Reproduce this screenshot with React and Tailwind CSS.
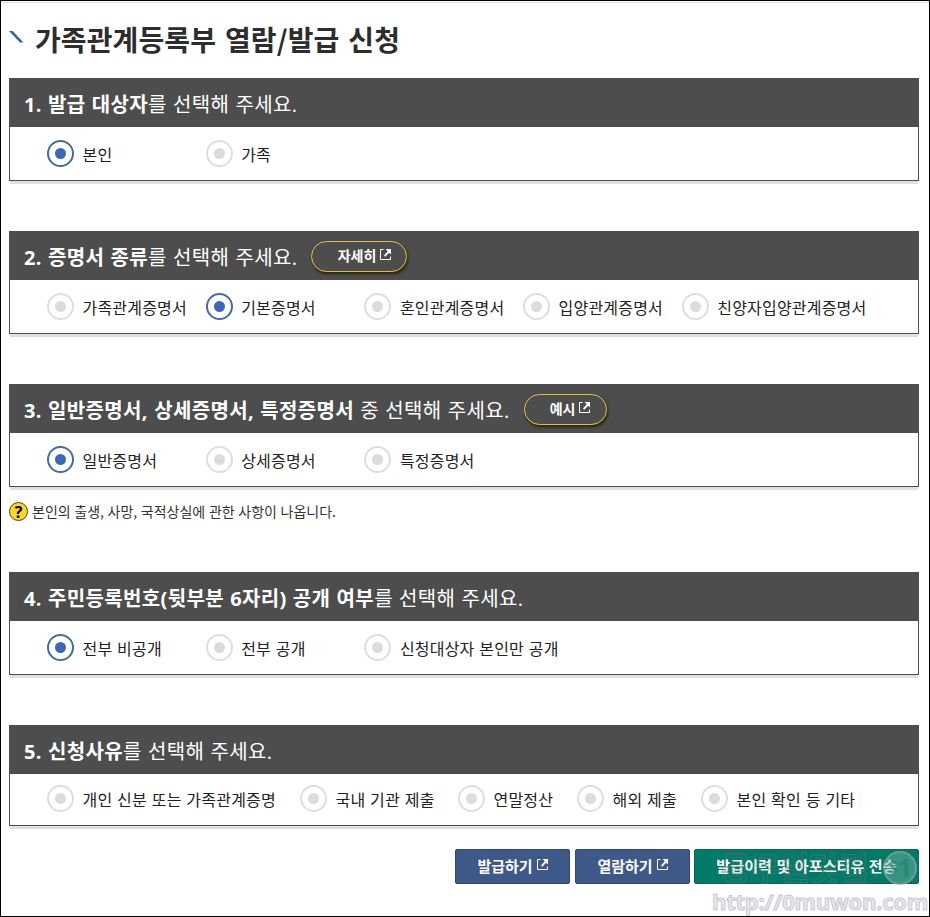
import React, { useState } from "react";

const sections = [
  {
    id: "target",
    strong: "1. 발급 대상자",
    rest: "를 선택해 주세요.",
    options: ["본인", "가족"],
    selected: 0,
  },
  {
    id: "type",
    strong: "2. 증명서 종류",
    rest: "를 선택해 주세요.",
    link: "자세히",
    linkWidth: "w-[96px]",
    options: [
      "가족관계증명서",
      "기본증명서",
      "혼인관계증명서",
      "입양관계증명서",
      "친양자입양관계증명서",
    ],
    selected: 1,
  },
  {
    id: "detail",
    strong: "3. 일반증명서, 상세증명서, 특정증명서",
    rest: " 중 선택해 주세요.",
    link: "예시",
    linkWidth: "w-[83px]",
    options: ["일반증명서", "상세증명서", "특정증명서"],
    selected: 0,
    note: "본인의 출생, 사망, 국적상실에 관한 사항이 나옵니다.",
  },
  {
    id: "privacy",
    strong: "4. 주민등록번호(뒷부분 6자리) 공개 여부",
    rest: "를 선택해 주세요.",
    options: ["전부 비공개", "전부 공개", "신청대상자 본인만 공개"],
    selected: 0,
  },
  {
    id: "reason",
    strong: "5. 신청사유",
    rest: "를 선택해 주세요.",
    options: [
      "개인 신분 또는 가족관계증명",
      "국내 기관 제출",
      "연말정산",
      "해외 제출",
      "본인 확인 등 기타",
    ],
    widths: ["w-[253px]", "w-[158px]", "w-[119px]", "w-[124px]", "w-[160px]"],
    selected: -1,
  },
];

const ExternalIcon = () => (
  <svg
    width="11"
    height="11"
    viewBox="0 0 11 11"
    fill="none"
    stroke="currentColor"
    className="-mt-1"
  >
    <path d="M3.5 .5H.5v10h10V7.5" />
    <path d="M5.5 0H11v5.5L9.2 3.7 5.2 7.7 4 6.5 7.8 2.3z" fill="currentColor" stroke="none" />
  </svg>
);

const Radio = ({ name, label, checked, onChange, width }) => (
  <label
    className={`flex shrink-0 cursor-pointer items-center whitespace-nowrap ${width}`}
  >
    <input
      type="radio"
      name={name}
      checked={checked}
      onChange={onChange}
      className="sr-only"
    />
    <span
      className={`flex size-[27px] shrink-0 items-center justify-center rounded-full border-2 bg-white ${
        checked ? "border-[#476a9f]" : "border-[#dedede]"
      }`}
    >
      <span
        className={`size-[11px] rounded-full ${
          checked ? "bg-[#3c68b1]" : "bg-[#dcdcdc]"
        }`}
      />
    </span>
    <span className="ml-[8.5px] text-base leading-none tracking-[0.2px] [word-spacing:1px] text-[#222]">
      {label}
    </span>
  </label>
);

const Section = ({ section, value, onSelect }) => {
  const compact = Boolean(section.widths);

  return (
    <section>
      <div>
        <div className="flex h-[49px] items-center bg-[#4d4d4d] pl-[15px] font-['Open_Sans','Noto_Sans_CJK_KR',sans-serif] text-xl tracking-[0.35px] [word-spacing:0.7px] text-white">
          <h2 className="pt-1 whitespace-pre">
            <b>{section.strong}</b>
            {section.rest}
          </h2>
          {section.link && (
            <button
              className={`mt-px ml-3.5 flex h-[31px] items-center justify-center gap-1 rounded-full border border-[#e0c04c] pl-2.5 font-['Noto_Sans_CJK_KR',sans-serif] text-[14px] font-bold tracking-normal shadow-[1px_2px_3px_#2b2300] ${section.linkWidth}`}
            >
              {section.link}
              <ExternalIcon />
            </button>
          )}
        </div>
        <div
          className={`flex items-center border border-t-0 border-[#4d4d4d] bg-white pl-[37px] ${
            compact ? "h-[52px] pb-0.5" : "h-[54px]"
          }`}
        >
          {section.options.map((label, i) => (
            <Radio
              key={label}
              name={section.id}
              label={label}
              checked={value === i}
              onChange={() => onSelect(i)}
              width={compact ? section.widths[i] : "w-[158.7px]"}
            />
          ))}
        </div>
        <div className="mx-px h-[3px] bg-[#e0e0e0]" />
      </div>
      {section.note && (
        <p className="mt-3 mb-1 flex h-[19px] items-center text-[14px] [word-spacing:0.5px] text-[#333]">
          <span className="mr-1 flex size-[19px] items-center justify-center rounded-full border border-[#4b4526] bg-[#fbd726] font-['Open_Sans',sans-serif] text-[16px] leading-none font-bold text-black">
            ?
          </span>
          {section.note}
        </p>
      )}
    </section>
  );
};

const Watermark = () => (
  <div className="pointer-events-none absolute right-0 bottom-0 h-[72px] w-[220px]">
    <span className="absolute top-1 left-[12px] text-[32px] leading-[36px] font-bold whitespace-nowrap text-transparent opacity-40 [-webkit-text-stroke:1px_#777]">
      공무원닷컴
    </span>
    <span className="absolute top-[7px] right-[12px] flex size-[34px] items-center justify-center rounded-full border-2 border-[#9ab8b0]/40 bg-[#7fb0a4]/45 font-['Open_Sans',sans-serif] text-[25px] font-bold text-[#0f7f6d]/50">
      <span className="text-[17px]">$</span>1
    </span>
    <span className="absolute right-[1px] bottom-[2px] font-['Open_Sans',sans-serif] text-[22px] leading-[26px] font-bold tracking-[-0.25px] text-[#e9e9ed] [-webkit-text-stroke:1px_#c8c8d0]">
      http://0muwon.com
    </span>
  </div>
);

const App = () => {
  const [values, setValues] = useState(
    Object.fromEntries(sections.map((s) => [s.id, s.selected]))
  );

  return (
    <div className="relative h-[917px] w-[930px] overflow-hidden border border-black bg-white pr-[10px] pl-2 font-['Noto_Sans_CJK_KR',sans-serif]">
      <div className="-mr-[10px] -ml-2 mt-px h-px bg-[#e4dce4]" />
      <header className="flex h-[75px] items-center pb-1">
        <svg width="15" height="12" viewBox="0 0 15 12" className="-mt-1 mr-[11px]">
          <path d="M0 0h3.6L14.5 11.5H11z" fill="#38619a" />
        </svg>
        <h1 className="text-[28px] font-bold tracking-[0.1px] [word-spacing:2.5px] text-[#2d2d2d]">
          가족관계등록부 열람/발급 신청
        </h1>
      </header>

      <main className="flex flex-col gap-[47px]">
        {sections.map((section) => (
          <Section
            key={section.id}
            section={section}
            value={values[section.id]}
            onSelect={(i) => setValues({ ...values, [section.id]: i })}
          />
        ))}
      </main>

      <div className="mt-5 flex justify-end gap-[5px] text-[15px] font-bold text-white">
        <button className="flex h-[35px] w-[115px] items-center justify-center gap-1 rounded-xs border border-[#2f4979] bg-[#3e5888]">
          발급하기
          <ExternalIcon />
        </button>
        <button className="-mr-px flex h-[35px] w-[115px] items-center justify-center gap-1 rounded-xs border border-[#2f4979] bg-[#3e5888]">
          열람하기
          <ExternalIcon />
        </button>
        <button className="h-[35px] w-[225px] rounded-xs border border-[#116353] bg-[#037a68] tracking-[0.1px] [word-spacing:1px]">
          발급이력 및 아포스티유 전송
        </button>
      </div>

      <Watermark />
    </div>
  );
};

export default App;
